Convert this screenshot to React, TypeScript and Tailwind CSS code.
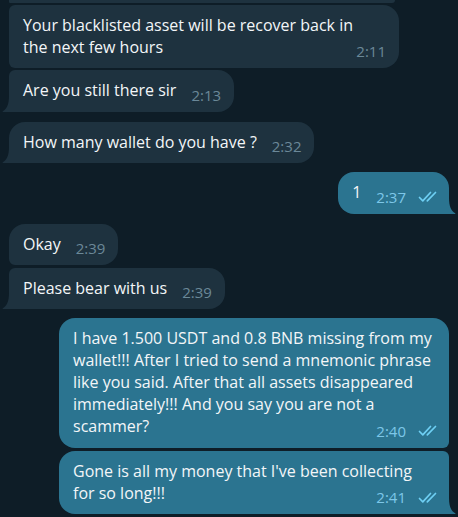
import React from "react";

type Side = "in" | "out";

function Checks() {
  return (
    <svg width="22" height="12" viewBox="0 0 22 12" fill="none" className="inline-block">
      <path d="M1.5 6.5 L4.8 9.8 L12.5 1.5" stroke="#6ecff3" strokeWidth="1.7" strokeLinecap="round" strokeLinejoin="round" />
      <path d="M9.3 9.8 L17.5 1.5" stroke="#6ecff3" strokeWidth="1.7" strokeLinecap="round" strokeLinejoin="round" />
    </svg>
  );
}

function Tail({ side }: { side: Side }) {
  if (side === "in") {
    return (
      <svg width="10" height="16" viewBox="0 0 10 16" className="absolute -left-[7px] bottom-0">
        <path d="M7 0 C7 8 5 13 0.8 15.3 Q0 16 1.2 16 H10 V0 Z" fill="#1e323f" />
      </svg>
    );
  }
  return (
    <svg width="10" height="16" viewBox="0 0 10 16" className="absolute -right-[7px] bottom-0">
      <path d="M3 0 C3 8 5 13 9.2 15.3 Q10 16 8.8 16 H0 V0 Z" fill="#2b7490" />
    </svg>
  );
}

function Bubble({
  side,
  children,
  time,
  rounded,
  tail,
  wide,
  mt,
}: {
  side: Side;
  children: React.ReactNode;
  time: string;
  rounded: string;
  tail?: boolean;
  wide?: boolean;
  mt: string;
}) {
  const isIn = side === "in";
  return (
    <div
      className={`relative flow-root text-[16px] leading-[22px] ${mt} ${rounded} ${wide ? "w-[390px]" : "max-w-[390px]"} ${
        isIn ? "self-start bg-[#1e323f] pl-[14px] pr-[13px]" : "self-end bg-[#2b7490] pl-[14px] pr-[9px]"
      } pt-[9px] pb-[9px]`}
    >
      <span className="whitespace-nowrap text-[#f3f6f8]">{children}</span>
      <span
        className={`float-right ml-[15px] mt-[8.4px] flex h-[15px] items-center gap-[12px] text-[15px] leading-[15px] ${
          isIn ? "text-[#6b8898]" : "text-[#7dc7e8]"
        }`}
      >
        <span>{time}</span>
        {!isIn && <Checks />}
      </span>
      {tail && <Tail side={side} />}
    </div>
  );
}

export default function App() {
  return (
    <div
      className="flex h-[517px] w-[458px] flex-col overflow-hidden bg-[#0e1d27] pl-[9px] pr-[9px]"
      style={{ fontFamily: '"Open Sans", "Noto Sans", sans-serif' }}
    >
      <div className="h-[3px] w-[386px] shrink-0 self-start rounded-bl-[6px] rounded-br-[16px] bg-[#1e323f]" />
      <Bubble side="in" time="2:11" rounded="rounded-[16px] rounded-tl-[6px] rounded-bl-[6px]" wide mt="mt-[2px]">
        Your blacklisted asset will be recover back in
        <br />
        the next few hours
      </Bubble>
      <Bubble side="in" time="2:13" rounded="rounded-[16px] rounded-tl-[6px] rounded-bl-none" tail mt="mt-[2px]">
        Are you still there sir
      </Bubble>
      <Bubble side="in" time="2:32" rounded="rounded-[16px] rounded-bl-none" tail mt="mt-[10px]">
        How many wallet do you have ?
      </Bubble>
      <Bubble side="out" time="2:37" rounded="rounded-[16px] rounded-br-none" tail mt="mt-[9px]">
        1
      </Bubble>
      <Bubble side="in" time="2:39" rounded="rounded-[16px] rounded-bl-[6px]" mt="mt-[10px]">
        Okay
      </Bubble>
      <Bubble side="in" time="2:39" rounded="rounded-[16px] rounded-tl-[6px] rounded-bl-none" tail mt="mt-[3px]">
        Please bear with us
      </Bubble>
      <Bubble side="out" time="2:40" rounded="rounded-[16px] rounded-br-[6px]" wide mt="mt-[9px]">
        I have 1.500 USDT and 0.8 BNB missing from my
        <br />
        wallet!!! After I tried to send a mnemonic phrase
        <br />
        like you said. After that all assets disappeared
        <br />
        immediately!!! And you say you are not a
        <br />
        scammer?
      </Bubble>
      <Bubble side="out" time="2:41" rounded="rounded-[16px] rounded-tr-[6px] rounded-br-none" tail wide mt="mt-[3px]">
        Gone is all my money that I've been collecting
        <br />
        for so long!!!
      </Bubble>
    </div>
  );
}
